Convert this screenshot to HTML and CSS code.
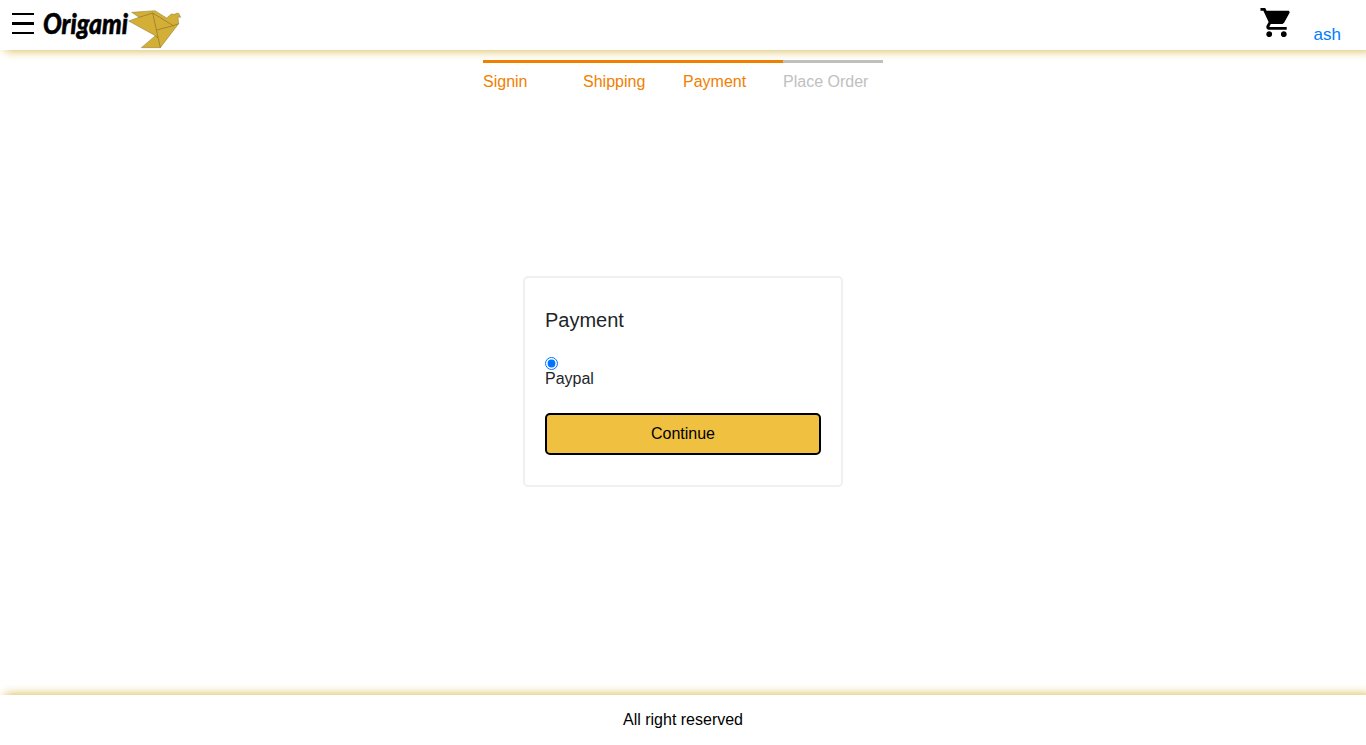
FILE: index.html
```html
<!DOCTYPE html>
<html lang="en">
<head>
<meta charset="utf-8">
<title>Origami</title>
<link rel="stylesheet" href="styles.css">
</head>
<body>
<div class="page">
  <header class="header">
    <div class="brand">
      <button class="menu" aria-label="Menu"><span></span><span></span><span></span></button>
      <svg class="wordmark" width="96" height="50" viewBox="0 0 96 50"><text class="wordmark-text" x="1" y="34" textLength="85" lengthAdjust="spacingAndGlyphs">Origami</text></svg>
      <svg class="bird" width="54" height="39" viewBox="114 30 162 117">
        <path class="bird-body" d="M116 63 147 52 125 37 195 32 230 54 244 42 253 43 262 39 267 41 272 52 264 51 266 71 211 143H154L196 107Z"/>
        <path class="bird-fold" d="M147 52 188 39 250 77 266 71M188 39 211 143M200 90 250 77M196 107 204 113"/>
      </svg>
    </div>
    <nav class="links">
      <svg class="cart" width="35" height="35" viewBox="0 0 24 24"><path d="M7 18c-1.1 0-1.99.9-1.99 2S5.9 22 7 22s2-.9 2-2-.9-2-2-2zM1 2v2h2l3.6 7.59-1.35 2.45c-.16.28-.25.61-.25.96 0 1.1.9 2 2 2h12v-2H7.42c-.14 0-.25-.11-.25-.25l.03-.12.9-1.63h7.45c.75 0 1.41-.41 1.75-1.03l3.58-6.49c.08-.14.12-.31.12-.48 0-.55-.45-1-1-1H5.21l-.94-2H1zm16 16c-1.1 0-1.99.9-1.99 2s.89 2 1.99 2 2-.9 2-2-.9-2-2-2z"/></svg>
      <a class="user">ash</a>
    </nav>
  </header>
  <main class="main">
    <div class="steps">
      <div class="step active">Signin</div>
      <div class="step active">Shipping</div>
      <div class="step active">Payment</div>
      <div class="step">Place Order</div>
    </div>
    <div class="content">
      <form class="card">
        <h2 class="title">Payment</h2>
        <div class="option">
          <input class="radio" type="radio" name="method" id="paypal" checked>
          <label class="label" for="paypal">Paypal</label>
        </div>
        <button class="continue" type="button">Continue</button>
      </form>
    </div>
  </main>
  <footer class="footer">All right reserved</footer>
</div>
</body>
</html>
```
FILE: styles.css
```css
* { box-sizing: border-box; }
body { margin: 0; font: 16px/24px "Liberation Sans", Arial, sans-serif; color: #212529; background: #fff; overflow: hidden; }
.page { display: grid; grid-template-rows: 50px 1fr 50px; height: 745px; }
.header { display: flex; justify-content: space-between; box-shadow: 5px 0 10px #d4af37; background: #fff; }
.brand { display: flex; padding-left: 12px; }
.menu { display: flex; flex-direction: column; gap: 7px; width: 22px; height: 50px; padding: 13px 0 0; border: 0; background: none; }
.menu span { width: 22px; height: 2.4px; background: #000; }
.wordmark { margin-left: 8px; }
.wordmark-text { font: italic 900 28px Lato, sans-serif; fill: #000; stroke: #000; stroke-width: .5px; }
.bird { margin: 10px 0 0 -10px; }
.bird-body { fill: #d4af37; stroke: #8c7a3a; stroke-width: 1.5; }
.bird-fold { fill: none; stroke: #806b25; stroke-width: 1.8; }
.links { display: flex; padding-right: 25px; }
.cart { margin: 5px 20px 0 0; }
.user { margin-top: 22px; color: #007bff; font-size: 17px; line-height: 25px; }
.main { display: flex; flex-direction: column; }
.steps { display: flex; width: 400px; margin: 10px auto 0; }
.step { width: 100px; padding-top: 7px; border-top: 3px solid #c0c0c0; color: #c0c0c0; }
.step.active { border-color: #f08000; color: #f08000; }
.content { display: flex; flex: 1; justify-content: center; align-items: flex-start; padding-top: 182px; }
.card { width: 320px; height: 211px; padding: 30px 20px; border: 2px solid #f0f0f0; border-radius: 5px; }
.title { margin: 0; font-size: 20px; line-height: 24px; font-weight: 400; }
.option { display: flex; flex-direction: column; margin-top: 25px; }
.radio { width: 13px; height: 13px; margin: 0; accent-color: #0075ff; }
.label { line-height: 18px; }
.continue { width: 100%; height: 42px; margin-top: 25px; padding: 0; border: 2px solid #000; border-radius: 5px; background: #f0c040; color: #000; font: inherit; }
.footer { padding-top: 13px; text-align: center; color: #000; background: #fff; box-shadow: 5px 0 10px #d4af37; }
```
